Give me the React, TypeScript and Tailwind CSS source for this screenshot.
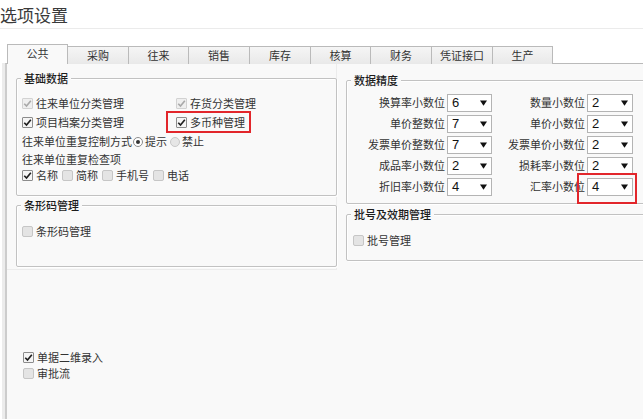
import React from 'react';

type CheckState = 'on' | 'dim' | 'off';

function Check({ state }: { state: CheckState }) {
  if (state === 'off') {
    return <span className="w-[11px] h-[11px] shrink-0 rounded-[2px] border border-[#c6c6c6] bg-[#e4e4e4]" />;
  }
  const box = state === 'on' ? 'border-[#8c8c8c] bg-[#f5f5f5]' : 'border-[#d2d2d2] bg-[#efefef]';
  return (
    <span className={`w-[11px] h-[11px] shrink-0 rounded-[1px] border flex items-center justify-center ${box}`}>
      <svg viewBox="0 0 10 10" className="w-[9px] h-[9px]">
        <path d="M1.4 5.2 L3.9 7.9 L8.7 1.9" fill="none" stroke={state === 'on' ? '#1f1f1f' : '#a9a9a9'} strokeWidth="1.8" />
      </svg>
    </span>
  );
}

function CheckItem({ state, label }: { state: CheckState; label: string }) {
  return (
    <span className="inline-flex items-center gap-[3px]">
      <Check state={state} />
      <span>{label}</span>
    </span>
  );
}

function Radio({ on }: { on: boolean }) {
  return (
    <span className={`w-[10px] h-[10px] shrink-0 rounded-full border flex items-center justify-center ${on ? 'border-[#8c8c8c] bg-white' : 'border-[#c8c8c8] bg-[#e6e6e6]'}`}>
      {on && <span className="w-[4px] h-[4px] rounded-full bg-[#333]" />}
    </span>
  );
}

function Select({ value, wide }: { value: string; wide?: boolean }) {
  return (
    <span className={`h-[18px] ${wide ? 'w-[46px]' : 'w-[45px]'} ml-[2px] shrink-0 bg-white border border-[#b4b4b4] flex items-center justify-between pl-[4px] pr-[4px] font-['Liberation_Sans',sans-serif] text-[13px] text-[#111]`}>
      <span>{value}</span>
      <svg viewBox="0 0 8 6" className="w-[7px] h-[6px]">
        <path d="M0 0 H8 L4 6 Z" fill="#111" />
      </svg>
    </span>
  );
}

function Group({ title, className, children }: { title: string; className: string; children: React.ReactNode }) {
  return (
    <div className={`relative border border-[#c2c2c2] rounded-[2px] shadow-[inset_1px_1px_0_#fff,1px_1px_0_#fff] ${className}`}>
      <span className="absolute -top-[8px] left-[4px] px-[3px] bg-[#f9f9f9] leading-[14px] font-medium text-[#1c1c1c]">
        {title}
      </span>
      {children}
    </div>
  );
}

const TABS = [
  { label: '公共', w: 'w-[61px]' },
  { label: '采购', w: 'w-[62px]' },
  { label: '往来', w: 'w-[61px]' },
  { label: '销售', w: 'w-[62px]' },
  { label: '库存', w: 'w-[62px]' },
  { label: '核算', w: 'w-[61px]' },
  { label: '财务', w: 'w-[62px]' },
  { label: '凭证接口', w: 'w-[62px]' },
  { label: '生产', w: 'w-[61px]' },
];

const PRECISION = [
  ['换算率小数位', '6', '数量小数位', '2'],
  ['单价整数位', '7', '单价小数位', '2'],
  ['发票单价整数位', '7', '发票单价小数位', '2'],
  ['成品率小数位', '2', '损耗率小数位', '2'],
  ['折旧率小数位', '4', '汇率小数位', '4'],
];

export default function App() {
  return (
    <div className="w-[643px] h-[419px] overflow-hidden bg-white flex flex-col font-['Noto_Sans_CJK_SC',sans-serif] text-[11px] text-[#333]">
      {/* Header */}
      <div className="h-[29px] shrink-0 border-b border-[#ebebeb] pt-[3px] text-[17px] leading-[23px] text-[#3a3a3a]">
        选项设置
      </div>

      {/* Tabs */}
      <div className="mt-[15px] -mb-px relative z-10 flex items-end h-[20px] pl-[7px] shrink-0">
        {TABS.map((t, i) => (
          <div
            key={t.label}
            className={`${t.w} ${i === 0 ? 'h-[20px] bg-[#f9f9f9] pb-[2px]' : '-ml-px h-[18px] bg-gradient-to-b from-[#f5f5f5] to-[#e9e9e9]'} border-t border-l border-r border-[#bababa] flex items-center justify-center text-[#333]`}
          >
            {t.label}
          </div>
        ))}
      </div>

      {/* Panel */}
      <div className="flex-1 ml-[5px] border-l-2 border-t border-[#cccccc] border-t-[#bababa] bg-[#f9f9f9] flex items-start shadow-[-3px_0_0_#ececec]">
        {/* Left column */}
        <div className="w-[330px] shrink-0 flex flex-col">
          <div className="pl-[9px] pb-[2px] border-b border-r border-[#ececec]">
            <Group title="基础数据" className="mt-[14px] w-[321px] h-[118px] pl-[5px] pt-[15px]">
              <div className="flex items-center h-[19px]">
                <div className="w-[154px]"><CheckItem state="dim" label="往来单位分类管理" /></div>
                <CheckItem state="dim" label="存货分类管理" />
              </div>
              <div className="flex items-center h-[19px]">
                <div className="w-[154px]"><CheckItem state="on" label="项目档案分类管理" /></div>
                <span className="relative inline-flex">
                  <CheckItem state="on" label="多币种管理" />
                  <span className="absolute -left-[10px] -right-[6px] -top-[3px] -bottom-[2px] border-2 border-[#e2262b]" />
                </span>
              </div>
              <div className="flex items-center h-[19px]">
                <span>往来单位重复控制方式</span>
                <span className="ml-[1px]"><Radio on /></span>
                <span className="ml-[2px]">提示</span>
                <span className="ml-[3px]"><Radio on={false} /></span>
                <span className="ml-[2px]">禁止</span>
              </div>
              <div className="flex items-center h-[17px]">往来单位重复检查项</div>
              <div className="flex items-center h-[15px] gap-[4px]">
                <CheckItem state="on" label="名称" />
                <CheckItem state="off" label="简称" />
                <CheckItem state="off" label="手机号" />
                <CheckItem state="off" label="电话" />
              </div>
            </Group>
            <Group title="条形码管理" className="mt-[9px] w-[321px] h-[62px] pl-[5px] pt-[16px]">
              <div className="flex items-center h-[19px]">
                <CheckItem state="off" label="条形码管理" />
              </div>
            </Group>
          </div>
          <div className="mt-[79px] pl-[16px]">
            <div className="flex items-center h-[16px]"><CheckItem state="on" label="单据二维录入" /></div>
            <div className="flex items-center h-[16px]"><CheckItem state="off" label="审批流" /></div>
          </div>
        </div>

        {/* Right column */}
        <div className="ml-[9px] flex-1 flex flex-col">
          <Group title="数据精度" className="mt-[16px] w-[310px] h-[124px] pt-[11px]">
            {PRECISION.map(([l1, v1, l2, v2], i) => (
              <div key={l1} className="flex items-center h-[21px]">
                <span className="w-[98px] text-right">{l1}</span>
                <Select value={v1} />
                <span className="w-[93px] text-right">{l2}</span>
                {i === 4 ? (
                  <span className="relative inline-flex">
                    <Select value={v2} wide />
                    <span className="absolute -left-[8px] -right-[4px] -top-[5px] -bottom-[8px] border-2 border-[#e2262b]" />
                  </span>
                ) : (
                  <Select value={v2} wide />
                )}
              </div>
            ))}
          </Group>
          <Group title="批号及效期管理" className="mt-[10px] w-[310px] h-[47px] pl-[6px] pt-[16px]">
            <div className="flex items-center h-[19px]">
              <CheckItem state="off" label="批号管理" />
            </div>
          </Group>
        </div>
      </div>
    </div>
  );
}
